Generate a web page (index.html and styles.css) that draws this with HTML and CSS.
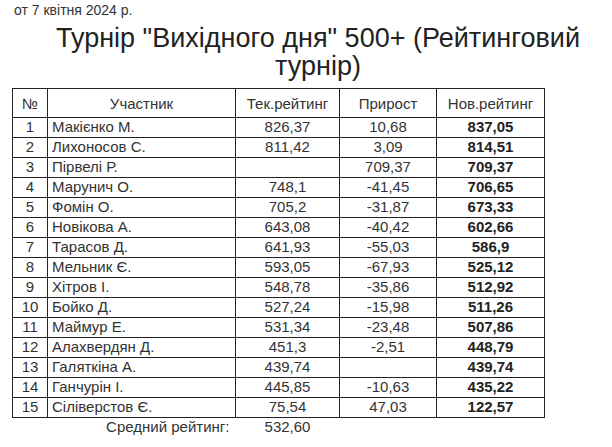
FILE: index.html
```html
<!DOCTYPE html>
<html lang="uk">
<head>
    <meta charset="UTF-8" />
    <meta name="viewport" content="width=device-width, initial-scale=1.0" />
    <link rel="stylesheet" href="styles.css">
</head>
<body>
    <p class="date">от 7 квітня 2024 р.</p>
    <h1 class="title">Турнір "Вихідного дня" 500+ (Рейтинговий турнір)</h1>

    <table class="rating">
        <colgroup>
            <col class="col-num">
            <col class="col-name">
            <col class="col-cur">
            <col class="col-diff">
            <col class="col-new">
        </colgroup>
        <thead>
            <tr>
                <th>№</th>
                <th>Участник</th>
                <th>Тек.рейтинг</th>
                <th>Прирост</th>
                <th>Нов.рейтинг</th>
            </tr>
        </thead>
        <tbody>
            <tr><td>1</td><td class="name">Макієнко М.</td><td>826,37</td><td>10,68</td><td class="new">837,05</td></tr>
            <tr><td>2</td><td class="name">Лихоносов С.</td><td>811,42</td><td>3,09</td><td class="new">814,51</td></tr>
            <tr><td>3</td><td class="name">Пірвелі Р.</td><td></td><td>709,37</td><td class="new">709,37</td></tr>
            <tr><td>4</td><td class="name">Марунич О.</td><td>748,1</td><td>-41,45</td><td class="new">706,65</td></tr>
            <tr><td>5</td><td class="name">Фомін О.</td><td>705,2</td><td>-31,87</td><td class="new">673,33</td></tr>
            <tr><td>6</td><td class="name">Новікова А.</td><td>643,08</td><td>-40,42</td><td class="new">602,66</td></tr>
            <tr><td>7</td><td class="name">Тарасов Д.</td><td>641,93</td><td>-55,03</td><td class="new">586,9</td></tr>
            <tr><td>8</td><td class="name">Мельник Є.</td><td>593,05</td><td>-67,93</td><td class="new">525,12</td></tr>
            <tr><td>9</td><td class="name">Хітров І.</td><td>548,78</td><td>-35,86</td><td class="new">512,92</td></tr>
            <tr><td>10</td><td class="name">Бойко Д.</td><td>527,24</td><td>-15,98</td><td class="new">511,26</td></tr>
            <tr><td>11</td><td class="name">Маймур Е.</td><td>531,34</td><td>-23,48</td><td class="new">507,86</td></tr>
            <tr><td>12</td><td class="name">Алахвердян Д.</td><td>451,3</td><td>-2,51</td><td class="new">448,79</td></tr>
            <tr><td>13</td><td class="name">Галяткіна А.</td><td>439,74</td><td></td><td class="new">439,74</td></tr>
            <tr><td>14</td><td class="name">Ганчурін І.</td><td>445,85</td><td>-10,63</td><td class="new">435,22</td></tr>
            <tr><td>15</td><td class="name">Сіліверстов Є.</td><td>75,54</td><td>47,03</td><td class="new">122,57</td></tr>
        </tbody>
        <tfoot>
            <tr>
                <td colspan="2" class="avg-label">Средний рейтинг:</td>
                <td>532,60</td>
                <td></td>
                <td></td>
            </tr>
        </tfoot>
    </table>
</body>
</html>
```

FILE: styles.css
```css
body {
    margin: 0;
    font-family: "Liberation Sans", Arial, sans-serif;
    color: #333;
    background-color: #fff;
}
.date {
    margin: 0;
    padding: 2px 0 0 14px;
    font-size: 14px;
    line-height: 17px;
}
.title {
    margin: 5px 0 8px 24px;
    font-size: 27px;
    font-weight: normal;
    line-height: 28px;
    text-align: center;
    color: #222;
}
/* Rating table */
.rating {
    margin-left: 12px;
    width: 532px;
    table-layout: fixed;
    border-collapse: collapse;
    font-size: 15px;
}
.col-num { width: 35px; }
.col-name { width: 188px; }
.col-cur { width: 104px; }
.col-diff { width: 97px; }
.col-new { width: 108px; }
.rating th {
    height: 28px;
    padding: 0;
    border: 1px solid #222;
    font-weight: normal;
    font-size: 15px;
    text-align: center;
}
.rating td {
    height: 17px;
    padding: 0 0 2px 0;
    border: 1px solid #222;
    line-height: 17px;
    text-align: center;
}
.rating td.name {
    text-align: left;
    padding-left: 4px;
}
.rating td.new {
    font-weight: bold;
    color: #222;
}
.rating tfoot td {
    border: none;
}
.rating td.avg-label {
    text-align: right;
    padding-right: 6px;
}
```
